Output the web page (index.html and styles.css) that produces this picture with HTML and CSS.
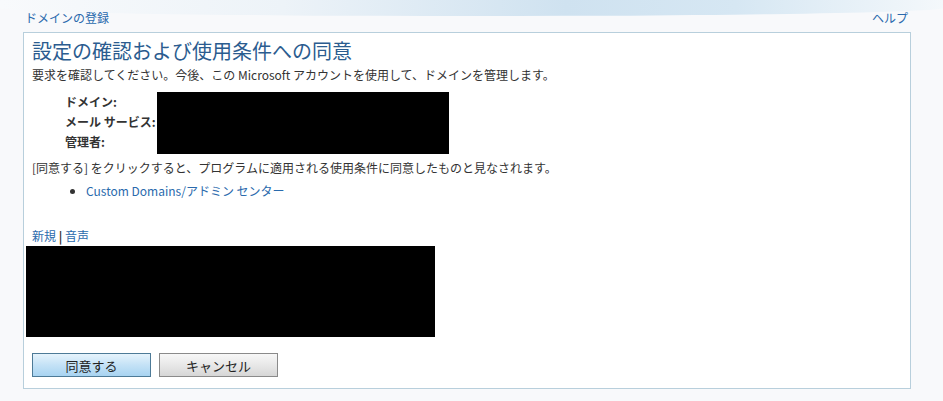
FILE: index.html
```html
<!DOCTYPE html>
<html lang="ja">
<head>
    <meta charset="UTF-8">
    <title>ドメインの登録</title>
    <link rel="stylesheet" href="styles.css">
</head>
<body>
<div class="top-glow"></div>
<div class="header">
    <a class="link" href="#">ドメインの登録</a>
    <a class="link" href="#">ヘルプ</a>
</div>

<div class="panel">
    <h1 class="title">設定の確認および使用条件への同意</h1>
    <p class="intro">要求を確認してください。今後、この Microsoft アカウントを使用して、ドメインを管理します。</p>

    <div class="details">
        <div class="labels">
            <span>ドメイン:</span>
            <span>メール サービス:</span>
            <span>管理者:</span>
        </div>
        <div class="redacted redacted-info"></div>
    </div>

    <p class="terms">[同意する] をクリックすると、プログラムに適用される使用条件に同意したものと見なされます。</p>
    <ul class="terms-list">
        <li><a class="link" href="#">Custom Domains/アドミン センター</a></li>
    </ul>

    <div class="captcha-links">
        <a class="link" href="#">新規</a> <span class="sep">|</span> <a class="link" href="#">音声</a>
    </div>
    <div class="redacted redacted-captcha"></div>

    <div class="buttons">
        <button class="btn btn-primary">同意する</button>
        <button class="btn">キャンセル</button>
    </div>
</div>
</body>
</html>
```

FILE: styles.css
```css
body {
    margin: 0;
    background: #f8f9fb;
    font-family: "Noto Sans CJK JP", "Noto Sans", sans-serif;
    font-size: 12px;
    color: #333;
    position: relative;
    height: 401px;
    overflow: hidden;
}

.top-glow {
    position: absolute;
    left: 0;
    top: 0;
    width: 943px;
    height: 16px;
    background: linear-gradient(90deg, #f8fafc 0%, #edf3f8 30%, #cfe2f0 60%, #d6e7f3 78%, #f4f8fb 100%);
    border-radius: 0 0 50% 50%;
}

a.link {
    color: #2a6aad;
    text-decoration: none;
}

.header {
    position: relative;
    display: flex;
    justify-content: space-between;
    padding: 9px 35px 0 25px;
    height: 23px;
    line-height: 18px;
}

.panel {
    margin-left: 23px;
    width: 886px;
    height: 355px;
    background: #fff;
    border: 1px solid #b8cfdc;
    box-sizing: content-box;
}

h1.title {
    margin: 5px 0 0 8px;
    font-size: 20px;
    font-weight: normal;
    line-height: 26px;
    color: #2b5c8f;
}

p.intro {
    margin: 2px 0 0 8px;
    line-height: 18px;
}

.details {
    display: flex;
    margin: 8px 0 0 41px;
    height: 62px;
}

.labels {
    display: flex;
    flex-direction: column;
    width: 92px;
    padding-top: 0;
    font-weight: bold;
    line-height: 20px;
}

.redacted {
    background: #000;
}

.redacted-info {
    width: 292px;
    height: 62px;
}

p.terms {
    margin: 4px 0 0 8px;
    line-height: 20px;
}

ul.terms-list {
    margin: 3px 0 0 0;
    padding-left: 62px;
    line-height: 20px;
}

.captcha-links {
    margin: 26px 0 0 8px;
    line-height: 18px;
}

.captcha-links .sep {
    font-weight: bold;
    color: #333;
}

.redacted-captcha {
    margin: 1px 0 0 2px;
    width: 409px;
    height: 91px;
}

.buttons {
    display: flex;
    gap: 8px;
    margin: 16px 0 0 8px;
}

.btn {
    width: 119px;
    height: 24px;
    font-family: "Noto Sans CJK JP", "Noto Sans", sans-serif;
    font-size: 13px;
    color: #222;
    border: 1px solid #8a8a8a;
    background: linear-gradient(#f7f7f7, #e8e8e8 50%, #d6d6d6);
    padding: 0;
}

.btn-primary {
    border-color: #4d7a97;
    background: linear-gradient(#e6f3fc, #c4e2f6 50%, #a8d3f1);
}
```
